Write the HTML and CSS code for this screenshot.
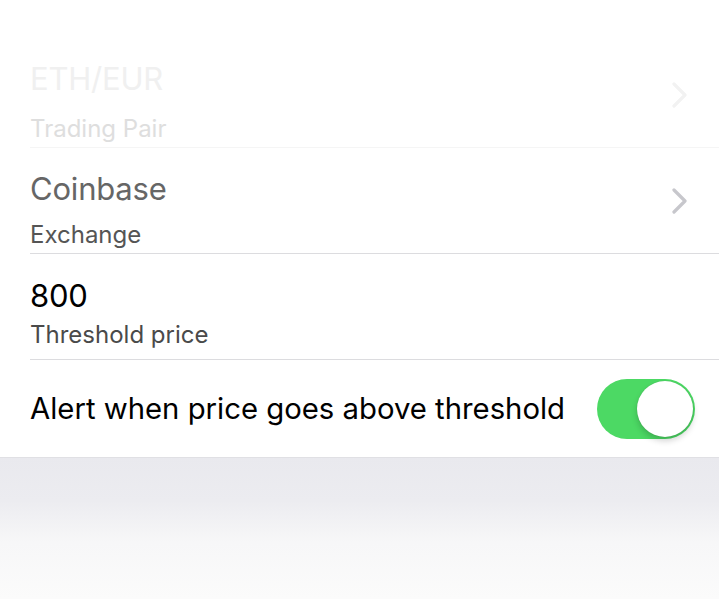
FILE: index.html
```html
<!DOCTYPE html>
<html>
<head>
<meta charset="utf-8">
<link rel="stylesheet" href="styles.css">
</head>
<body>
<div class="screen">
  <div class="list">
    <div class="row row-faded">
      <div class="cell">
        <div class="texts">
          <div class="title">ETH/EUR</div>
          <div class="subtitle">Trading Pair</div>
        </div>
        <svg class="chevron" width="16" height="26" viewBox="0 0 16 26"><path d="M2 2 L13 13 L2 24" fill="none" stroke="currentColor" stroke-width="3.2" stroke-linecap="round" stroke-linejoin="round"/></svg>
      </div>
    </div>
    <div class="row row-dim">
      <div class="cell">
        <div class="texts">
          <div class="title">Coinbase</div>
          <div class="subtitle">Exchange</div>
        </div>
        <svg class="chevron" width="16" height="26" viewBox="0 0 16 26"><path d="M2 2 L13 13 L2 24" fill="none" stroke="currentColor" stroke-width="3.2" stroke-linecap="round" stroke-linejoin="round"/></svg>
      </div>
    </div>
    <div class="row row-edit">
      <div class="cell">
        <div class="texts">
          <div class="title">800</div>
          <div class="subtitle">Threshold price</div>
        </div>
      </div>
    </div>
    <div class="row row-switch">
      <div class="cell">
        <div class="label">Alert when price goes above threshold</div>
        <div class="switch"><div class="knob"></div></div>
      </div>
    </div>
  </div>
  <div class="footer"></div>
</div>
</body>
</html>
```
FILE: styles.css
```css
html, body {
  margin: 0;
  padding: 0;
  background: #ffffff;
}
.screen {
  width: 719px;
  height: 599px;
  display: flex;
  flex-direction: column;
  font-family: "Inter", "Noto Sans", sans-serif;
  overflow: hidden;
}
.list {
  padding-top: 42px;
  background: #ffffff;
}
.row {
  padding-left: 30px;
}
.cell {
  height: 105px;
  border-bottom: 1px solid #dcdcdf;
  display: flex;
  align-items: center;
  padding-right: 30px;
}
.texts {
  flex: 1;
  align-self: flex-start;
  padding-top: 19px;
  display: flex;
  flex-direction: column;
  gap: 18px;
}
.title {
  font-size: 31px;
  line-height: 36px;
  color: #000;
  letter-spacing: -0.2px;
}
.subtitle {
  font-size: 24px;
  line-height: 28px;
  color: #4a4a4a;
}
.chevron {
  color: #c7c7cc;
  margin-right: 1px;
}
.row-faded .title { color: #f0f0f0; }
.row-faded .subtitle { color: #dedede; }
.row-faded .chevron { color: #f2f2f2; }
.row-faded .cell { border-bottom-color: #f5f5f5; }
.row-dim .texts { padding-top: 22.5px; gap: 14.5px; }
.row-dim .title { color: #666; }
.row-dim .subtitle { color: #555; }
.row-edit .texts { padding-top: 23.5px; gap: 7.5px; }
.row-switch .cell {
  height: 97px;
  border-bottom: none;
  padding-right: 24px;
}
.label {
  flex: 1;
  font-size: 29.3px;
  color: #000;
}
.switch {
  width: 98px;
  height: 60px;
  border-radius: 30px;
  background: #4cd964;
  display: flex;
  align-items: center;
  justify-content: flex-end;
  padding: 2px;
  box-sizing: border-box;
}
.knob {
  width: 56px;
  height: 56px;
  border-radius: 50%;
  background: #fff;
  box-shadow: 0 4px 6px rgba(0,0,0,0.18), 0 0 1px rgba(0,0,0,0.2);
}
.footer {
  flex: 1;
  border-top: 1px solid #e0e0e4;
  background: linear-gradient(#e9e9ee 0%, #ececf0 30%, #f7f7f8 60%, #fbfbfb 100%);
}
```
